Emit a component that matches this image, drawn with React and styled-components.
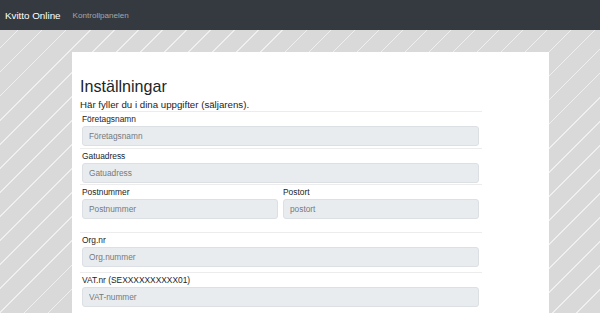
import React from 'react';
import styled, { createGlobalStyle } from 'styled-components';

const GlobalStyle = createGlobalStyle`
  html, body {
    margin: 0;
    padding: 0;
    height: 100%;
  }

  body {
    font-family: "Liberation Sans", Arial, sans-serif;
    color: #212529;
    background-color: #d9d9d9;
    background-image: repeating-linear-gradient(
      -45deg,
      #d9d9d9 0px,
      #d9d9d9 16px,
      #efefef 16px,
      #efefef 17px
    );
  }
`;

const Navbar = styled.nav`
  height: 30px;
  background-color: #343a40;
  display: flex;
  align-items: center;
  padding: 0 5px;
  gap: 12px;
`;

const Brand = styled.a`
  color: #fff;
  font-size: 9.8px;
`;

const NavLink = styled.a`
  color: rgba(255, 255, 255, 0.55);
  font-size: 8.1px;
`;

const Page = styled.main`
  display: flex;
  justify-content: center;
  padding: 22px 51px 0 72px;
`;

const Card = styled.section`
  background: #fff;
  width: 477px;
  min-height: 300px;
  padding: 22px 67px 0 8px;
  box-sizing: border-box;
`;

const Title = styled.h1`
  margin: 0;
  font-size: 16.1px;
  font-weight: 400;
  line-height: 24px;
`;

const Lead = styled.p`
  margin: 1px 0 0;
  font-size: 9.7px;
  line-height: 12px;
`;

const Group = styled.div`
  border-top: 1px solid #ececec;
  padding: 1px 3px ${({ $extra }) => $extra || 2}px 2px;
  display: grid;
  grid-template-columns: ${({ $cols }) => ($cols === 2 ? '1fr 1fr' : '1fr')};
  column-gap: 5px;
`;

const Field = styled.div`
  display: flex;
  flex-direction: column;
`;

const Label = styled.label`
  font-size: 8.4px;
  line-height: 13px;
`;

const Input = styled.input`
  box-sizing: border-box;
  height: 20px;
  width: 100%;
  background: #e9ecef;
  border: 1px solid #dcdfe3;
  border-radius: 3px;
  padding: 0 6px;
  font-family: inherit;
  font-size: 8.3px;
  color: #495057;

  &::placeholder {
    color: #747a80;
  }
`;

const fields = [
  { rows: [{ label: 'Företagsnamn', placeholder: 'Företagsnamn' }], extra: 2 },
  { rows: [{ label: 'Gatuadress', placeholder: 'Gatuadress' }], extra: 1 },
  {
    rows: [
      { label: 'Postnummer', placeholder: 'Postnummer' },
      { label: 'Postort', placeholder: 'postort' },
    ],
    extra: 13,
  },
  { rows: [{ label: 'Org.nr', placeholder: 'Org.nummer' }], extra: 5 },
  { rows: [{ label: 'VAT.nr (SEXXXXXXXXXX01)', placeholder: 'VAT-nummer' }], extra: 5 },
];

const App = () => (
  <>
    <GlobalStyle />
    <Navbar>
      <Brand>Kvitto Online</Brand>
      <NavLink>Kontrollpanelen</NavLink>
    </Navbar>
    <Page>
      <Card>
        <Title>Inställningar</Title>
        <Lead>Här fyller du i dina uppgifter (säljarens).</Lead>
        {fields.map(({ rows, extra }) => (
          <Group key={rows[0].label} $cols={rows.length} $extra={extra}>
            {rows.map(({ label, placeholder }) => (
              <Field key={label}>
                <Label>{label}</Label>
                <Input placeholder={placeholder} />
              </Field>
            ))}
          </Group>
        ))}
      </Card>
    </Page>
  </>
);

export default App;
